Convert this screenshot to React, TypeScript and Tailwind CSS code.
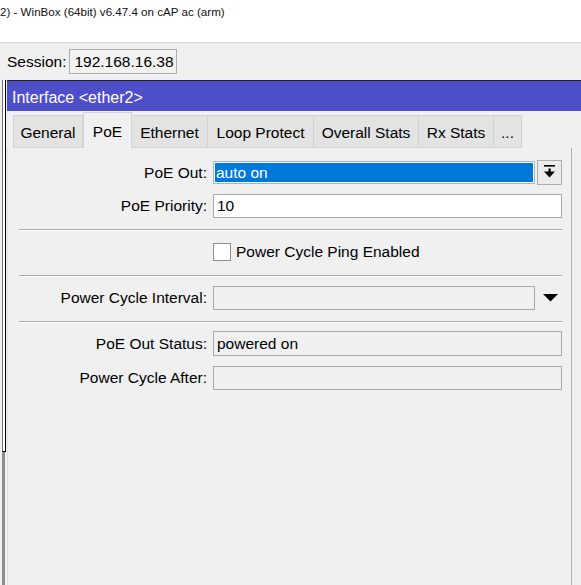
import React from "react";

const tabs: { label: string; w: number; active?: boolean }[] = [
  { label: "General", w: 70 },
  { label: "PoE", w: 49, active: true },
  { label: "Ethernet", w: 77 },
  { label: "Loop Protect", w: 107 },
  { label: "Overall Stats", w: 106 },
  { label: "Rx Stats", w: 76 },
  { label: "...", w: 29 },
];

function Label({ children }: { children: React.ReactNode }) {
  return <div className="w-[199px] shrink-0 text-right whitespace-nowrap">{children}</div>;
}

export default function App() {
  return (
    <div className="w-[581px] h-[585px] overflow-hidden bg-[#f0f0f0] flex flex-col font-['Liberation_Sans',Arial,sans-serif] text-black text-[15.5px]">
      {/* window caption */}
      <div className="h-[43px] shrink-0 bg-white border-b border-[#d6d6d6] text-[11.6px] leading-[16px] pt-[4px] whitespace-nowrap text-[#111]">
        2) - WinBox (64bit) v6.47.4 on cAP ac (arm)
      </div>
      {/* toolbar */}
      <div className="h-[37px] shrink-0 flex items-center pl-[7px]">
        <span>Session:</span>
        <div className="ml-[3px] w-[108px] h-[25px] border border-[#adadad] bg-[#f2f2f2] flex items-center pl-[4px] whitespace-nowrap">
          192.168.16.38
        </div>
      </div>
      {/* MDI area */}
      <div className="flex-1 min-h-0 flex flex-row">
        <div className="w-[7px] shrink-0 flex flex-col">
          <div className="h-[372px] ml-[2px] w-[4px] bg-white border-l border-r border-b border-l-[#6e6e6e] border-r-black border-b-black" />
          <div className="flex-1 ml-[2px] w-[3px] bg-[#8f8f8f]" />
        </div>
        <div className="flex-1 min-w-0 flex flex-col">
          <div className="h-[31px] shrink-0 border-t border-[#222] bg-[#4e4ec9] text-white text-[16px] pl-[5px] pt-[4px] flex items-center whitespace-nowrap">
            Interface &lt;ether2&gt;
          </div>
          <div className="h-[37px] shrink-0 flex items-end pl-[6px]">
            {tabs.map((t) => (
              <div
                key={t.label}
                style={{ width: t.w }}
                className={
                  t.active
                    ? "h-[36px] shrink-0 flex items-center justify-center bg-[#f0f0f0] border-l border-r border-t border-[#d3d3d3] whitespace-nowrap pt-[2px]"
                    : "h-[33px] shrink-0 flex items-center justify-center bg-[#e3e3e3] border border-[#d3d3d3] -ml-px first:ml-0 whitespace-nowrap pt-[3px]"
                }
              >
                {t.label}
              </div>
            ))}
          </div>
          <div className="flex-1 mr-[9px] border-l border-[#e2e2e2] border-r border-r-[#b0b0b0] flex flex-col">
            {/* PoE Out */}
            <div className="mt-[12px] h-[25px] flex items-center">
              <Label>PoE Out:</Label>
              <div className="ml-[6px] w-[322px] h-[23px] bg-[#0078d7] border border-[#9fb6cf] shadow-[inset_0_0_0_1px_#ffffff] text-white flex items-center pl-[2px] whitespace-nowrap">
                auto on
              </div>
              <div className="ml-[2px] w-[25px] h-[25px] border border-[#adadad] bg-[#ececec] flex items-center justify-center">
                <svg width="23" height="23" viewBox="0 0 23 23">
                  <rect x="6" y="4" width="11" height="1.6" fill="#000" />
                  <rect x="10.5" y="7.5" width="2.2" height="4" fill="#000" />
                  <polygon points="6,10.5 17,10.5 11.5,16.5" fill="#000" />
                </svg>
              </div>
            </div>
            {/* PoE Priority */}
            <div className="mt-[9px] h-[24px] flex items-center">
              <Label>PoE Priority:</Label>
              <div className="ml-[6px] w-[349px] h-[24px] bg-white border border-[#a9a9a9] flex items-center pl-[3px]">
                10
              </div>
            </div>
            <div className="mt-[11px] ml-[11px] w-[543px] h-[2px] border-t border-[#a8a8a8] border-b border-b-white" />
            {/* checkbox */}
            <div className="mt-[12px] h-[18px] flex items-center">
              <div className="ml-[205px] w-[18px] h-[18px] bg-white border border-[#8f8f8f] shrink-0" />
              <span className="ml-[5px] whitespace-nowrap">Power Cycle Ping Enabled</span>
            </div>
            <div className="mt-[14px] ml-[11px] w-[543px] h-[2px] border-t border-[#a8a8a8] border-b border-b-white" />
            {/* Power Cycle Interval */}
            <div className="mt-[9px] h-[24px] flex items-center">
              <Label>Power Cycle Interval:</Label>
              <div className="ml-[6px] w-[322px] h-[24px] bg-[#f0f0f0] border border-[#a9a9a9]" />
              <svg className="ml-[8px]" width="15" height="8" viewBox="0 0 15 8">
                <polygon points="0,0 15,0 7.5,7.5" fill="#000" />
              </svg>
            </div>
            <div className="mt-[11px] ml-[11px] w-[543px] h-[2px] border-t border-[#a8a8a8] border-b border-b-white" />
            {/* PoE Out Status */}
            <div className="mt-[8px] h-[25px] flex items-center">
              <Label>PoE Out Status:</Label>
              <div className="ml-[6px] w-[349px] h-[25px] bg-[#f0f0f0] border border-[#a9a9a9] flex items-center pl-[3px] whitespace-nowrap">
                powered on
              </div>
            </div>
            {/* Power Cycle After */}
            <div className="mt-[10px] h-[24px] flex items-center">
              <Label>Power Cycle After:</Label>
              <div className="ml-[6px] w-[349px] h-[24px] bg-[#f0f0f0] border border-[#a9a9a9]" />
            </div>
          </div>
        </div>
      </div>
    </div>
  );
}
